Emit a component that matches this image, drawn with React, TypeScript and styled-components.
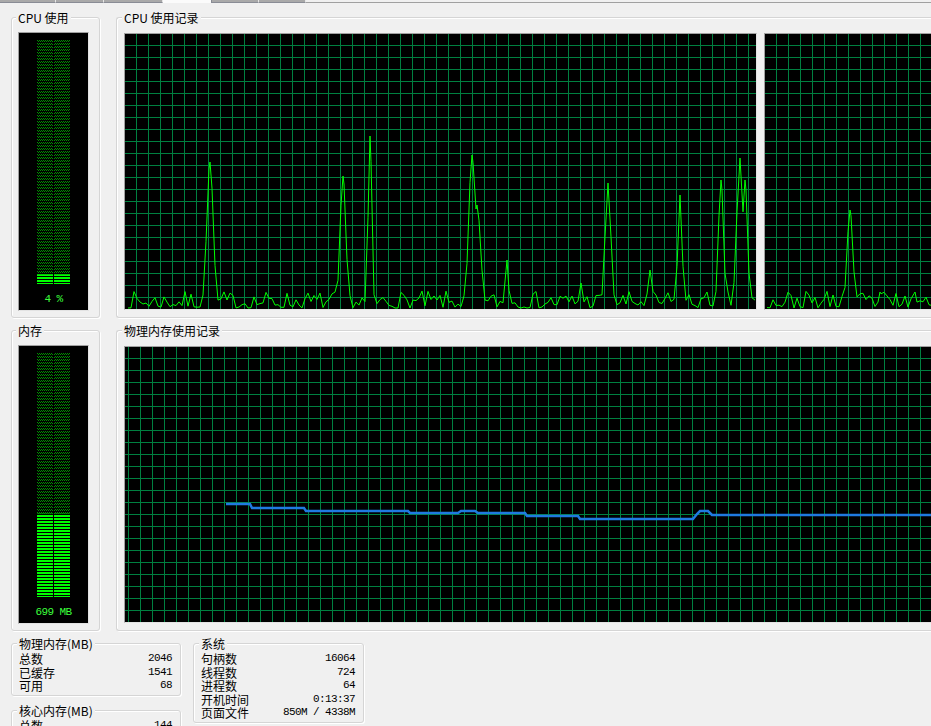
import styled, { createGlobalStyle } from 'styled-components'

const GlobalStyle = createGlobalStyle`
  html, body {
    margin: 0;
    background: #f0f0f0;
    overflow: hidden;
  }
  body {
    font-family: "Noto Sans CJK SC", "Noto Sans", sans-serif;
    font-size: 12px;
    color: #000;
  }
`

// deterministic noise so the trace looks the same every render
const mulberry = (seed: number) => () => {
  seed = (seed + 0x6d2b79f5) | 0
  let t = Math.imul(seed ^ (seed >>> 15), 1 | seed)
  t = (t + Math.imul(t ^ (t >>> 7), 61 | t)) ^ t
  return ((t ^ (t >>> 14)) >>> 0) / 4294967296
}

type Spike = [number, number, number]

const cpuTrace = (from: number, to: number, ox: number, spikes: Spike[], seed: number) => {
  const rnd = mulberry(seed)
  const base = 274
  const xs: number[] = []
  for (let x = from; x <= to; x += 3) xs.push(x)
  spikes.forEach(([c]) => xs.push(c))
  const sorted = Array.from(new Set(xs)).sort((a, b) => a - b)
  return sorted
    .map((ax) => {
      let y = base - Math.pow(rnd(), 1.6) * 17
      for (const [c, peak, w] of spikes) {
        const d = (ax - c) / w
        const s = base - (base - (peak - 34)) * Math.exp(-d * d)
        if (s < y) y = s
      }
      return `${ax - ox},${y.toFixed(1)}`
    })
    .join(' ')
}

const cpuSpikes1: Spike[] = [
  [210, 162, 4.5], [343, 176, 4], [370, 136, 2.5], [472, 155, 4.5], [477, 205, 5],
  [507, 260, 2], [581, 283, 2.5], [608, 183, 4], [650, 270, 3], [680, 195, 3],
  [721, 180, 3.5], [740, 158, 4.5], [745, 180, 3.5],
]
const cpuSpikes2: Spike[] = [[850, 210, 4], [880, 292, 2], [915, 292, 2]]

const memPoints: [number, number][] = [
  [226, 503], [250, 503], [252, 507], [304, 507], [306, 510], [408, 510], [410, 512],
  [458, 512], [461, 510], [475, 510], [478, 512], [525, 512], [527, 515], [578, 515],
  [580, 518], [693, 518], [697, 513], [700, 510], [708, 510], [712, 514], [960, 514],
]

const tabs = [
  { w: 56 }, { w: 48 }, { w: 59 }, { w: 49, active: true }, { w: 47 }, { w: 47 },
]

const Window = styled.div`
  width: 931px;
  height: 726px;
  overflow: hidden;
  background: #f0f0f0;
`

const TabStrip = styled.div`
  display: flex;
  height: 3px;
`

const Tab = styled.div<{ $w: number; $active?: boolean }>`
  flex: 0 0 ${(p) => p.$w}px;
  box-sizing: border-box;
  background: ${(p) => (p.$active ? '#fbfbfb' : '#a9a9a9')};
  border-right: 1px solid ${(p) => (p.$active ? '#898c95' : '#e6e6e6')};
  border-bottom: ${(p) => (p.$active ? 'none' : '1px solid #898c95')};
`

const TabRest = styled.div`
  flex: 1;
  border-bottom: 1px solid #a0a0a0;
`

const Content = styled.div`
  padding: 8px 0 0 11px;
  display: grid;
  grid-template-columns: 89px 840px;
  column-gap: 16px;
  row-gap: 6px;
`

const Group = styled.fieldset`
  margin: 0;
  min-width: 0;
  box-sizing: border-box;
  border: 1px solid #d5d5d5;
  border-radius: 3px;
  box-shadow: inset 1px 1px 0 #fff, 1px 1px 0 #fff;
  padding: 8px 9px 6px 6px;
`

const HistoryGroup = styled(Group)`
  padding: 8px 0 6px 7px;
  border-right: none;
`

const Legend = styled.legend`
  padding: 0 2px;
  margin-left: -2px;
  line-height: 13px;
  background: #f0f0f0;
  white-space: nowrap;
`

const Meter = styled.div`
  width: 71px;
  height: 279px;
  box-sizing: border-box;
  background: #000;
  border: 1px solid;
  border-color: #a0a0a0 #e3e3e3 #e3e3e3 #a0a0a0;
  display: flex;
  flex-direction: column;
  align-items: center;
  padding-top: 7px;
`

const Bars = styled.div`
  flex: 1;
  min-height: 0;
  width: 33px;

  svg {
    display: block;
  }
`

const MeterLabel = styled.div`
  height: 26px;
  line-height: 30px;
  font-family: "Liberation Mono", monospace;
  font-size: 11px;
  letter-spacing: -0.6px;
  color: #3cff3c;
  white-space: pre;
`

const GraphRow = styled.div`
  display: flex;
  gap: 7px;
  margin: 1px 0;
`

const Graph = styled.div<{ $w: number }>`
  flex: 0 0 ${(p) => p.$w}px;
  height: 277px;
  box-sizing: border-box;
  border: 1px solid;
  border-color: #a0a0a0 #e3e3e3 #e3e3e3 #a0a0a0;
  background: #000;
  overflow: hidden;

  svg {
    display: block;
  }
`

const BottomRow = styled.div`
  grid-column: 1 / -1;
  display: flex;
  align-items: flex-start;
  gap: 12px;
`

const StackCol = styled.div`
  display: flex;
  flex-direction: column;
  gap: 8px;
`

const StatGroup = styled(Group)<{ $w: number }>`
  width: ${(p) => p.$w}px;
  padding: 2px 8px 2px 7px;
`

const Row = styled.div`
  display: flex;
  justify-content: space-between;
  align-items: center;
  height: 13.5px;
  line-height: 13.5px;
`

const Value = styled.span`
  font-family: "Liberation Mono", monospace;
  font-size: 11px;
  letter-spacing: -0.6px;
  white-space: pre;
`

const UsageMeter = ({ id, level, label }: { id: string; level: number; label: string }) => {
  const top = `${(1 - level) * 100}%`
  const h = `${level * 100}%`
  return (
    <Meter>
      <Bars>
        <svg width="33" height="100%">
          <defs>
            <pattern id={`${id}-dim`} width="2" height="3" patternUnits="userSpaceOnUse">
              <rect x="0" y="0" width="1" height="1" fill="#009000" />
              <rect x="1" y="1" width="1" height="1" fill="#009000" />
            </pattern>
            <pattern id={`${id}-lit`} width="33" height="3" patternUnits="userSpaceOnUse">
              <rect width="33" height="2" fill="#00ff00" />
            </pattern>
          </defs>
          {[0, 17].map((x) => (
            <g key={x}>
              <rect x={x} y="0" width="16" height="100%" fill={`url(#${id}-dim)`} />
              <rect x={x} y={top} width="16" height={h} fill="#000" />
              <rect x={x} y={top} width="16" height={h} fill={`url(#${id}-lit)`} />
            </g>
          ))}
        </svg>
      </Bars>
      <MeterLabel>{label}</MeterLabel>
    </Meter>
  )
}

const GraphCanvas = ({
  id, w, ox, oy, children,
}: { id: string; w: number; ox: number; oy: number; children: React.ReactNode }) => (
  <svg width={w} height="275" shapeRendering="crispEdges">
    <defs>
      <pattern id={id} width="12" height="12" x={ox} y={oy} patternUnits="userSpaceOnUse">
        <rect x="0" y="0" width="12" height="1" fill="#008040" />
        <rect x="0" y="0" width="1" height="12" fill="#008040" />
      </pattern>
    </defs>
    <rect width={w} height="275" fill={`url(#${id})`} />
    <g shapeRendering="auto">{children}</g>
  </svg>
)

const Stat = ({ label, value }: { label: string; value: string }) => (
  <Row>
    <span>{label}</span>
    <Value>{value}</Value>
  </Row>
)

export default function App() {
  const memLine = memPoints.map(([x, y]) => `${x - 125},${y - 346}`).join(' ')

  return (
    <Window>
      <GlobalStyle />
      <TabStrip>
        {tabs.map((t, i) => (
          <Tab key={i} $w={t.w} $active={t.active} />
        ))}
        <TabRest />
      </TabStrip>

      <Content>
        <Group>
          <Legend>CPU 使用</Legend>
          <UsageMeter id="cpu" level={0.04} label="4 %" />
        </Group>
        <HistoryGroup>
          <Legend>CPU 使用记录</Legend>
          <GraphRow>
            <Graph $w={633}>
              <GraphCanvas id="g-cpu0" w={631} ox={11} oy={11}>
                <polyline
                  points={cpuTrace(128, 756, 125, cpuSpikes1, 7)}
                  fill="none"
                  stroke="#00ff00"
                  strokeWidth="1"
                />
              </GraphCanvas>
            </Graph>
            <Graph $w={193}>
              <GraphCanvas id="g-cpu1" w={191} ox={11} oy={11}>
                <polyline
                  points={cpuTrace(767, 955, 765, cpuSpikes2, 23)}
                  fill="none"
                  stroke="#00ff00"
                  strokeWidth="1"
                />
              </GraphCanvas>
            </Graph>
          </GraphRow>
        </HistoryGroup>

        <Group>
          <Legend>内存</Legend>
          <UsageMeter id="mem" level={699 / 2046} label="699 MB" />
        </Group>
        <HistoryGroup>
          <Legend>物理内存使用记录</Legend>
          <GraphRow>
            <Graph $w={830}>
              <GraphCanvas id="g-mem" w={828} ox={3} oy={11}>
                <polyline points={memLine} fill="none" stroke="#1f7ae0" strokeWidth="2.5" />
              </GraphCanvas>
            </Graph>
          </GraphRow>
        </HistoryGroup>

        <BottomRow>
          <StackCol>
            <StatGroup $w={170}>
              <Legend>物理内存(MB)</Legend>
              <Stat label="总数" value="2046" />
              <Stat label="已缓存" value="1541" />
              <Stat label="可用" value="68" />
            </StatGroup>
            <StatGroup $w={170}>
              <Legend>核心内存(MB)</Legend>
              <Stat label="总数" value="144" />
              <Stat label="分页数" value="110" />
            </StatGroup>
          </StackCol>
          <StatGroup $w={171}>
            <Legend>系统</Legend>
            <Stat label="句柄数" value="16064" />
            <Stat label="线程数" value="724" />
            <Stat label="进程数" value="64" />
            <Stat label="开机时间" value="0:13:37" />
            <Stat label="页面文件" value="850M / 4338M" />
          </StatGroup>
        </BottomRow>
      </Content>
    </Window>
  )
}
